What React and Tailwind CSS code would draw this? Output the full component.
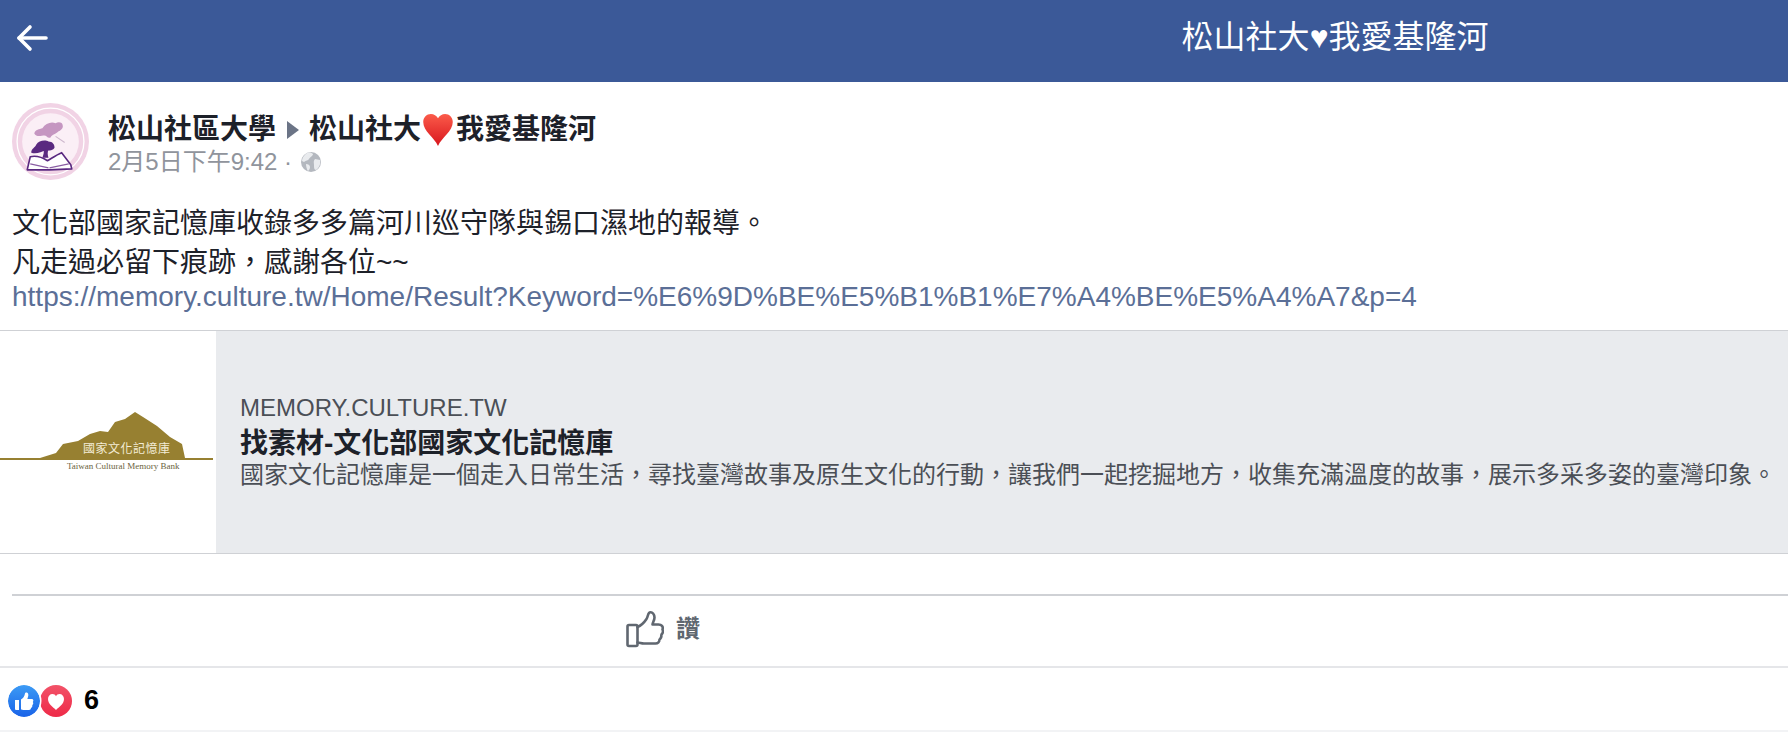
import React from "react";

const cjk = "font-['Liberation_Sans','Noto_Sans_CJK_TC',sans-serif]";

const BackArrow = () => (
  <svg width="32" height="28" viewBox="0 0 32 28" fill="none" stroke="#fff" strokeWidth="3.600" strokeLinecap="round" strokeLinejoin="round" className="shrink-0 mb-[6px]">
    <path d="M3 14H30" />
    <path d="M14 3 3 14 14 25" />
  </svg>
);

const Avatar = () => (
  <svg width="77" height="77" viewBox="0 0 76 76" className="shrink-0">
    <circle cx="38" cy="38" r="38" fill="#f1d3e5" />
    <circle cx="38" cy="38" r="33" fill="none" stroke="#fff" strokeWidth="1.300" />
    <circle cx="38" cy="38" r="28" fill="#fbeff6" />
    <path d="M22 30c1-4 5-4 8-5 3-5 9-7 13-5 3-2 7-1 7 2 1 3-2 5-4 6-3 3-6 3-8 6-3 1-4-2-6-2-3 0-8 2-10-2Z" fill="#c596c1" />
    <path d="M43 33l9 6" stroke="#ccb6cc" strokeWidth="1" />
    <path d="M19 49c0-4 4-5 5-8 2-4 9-5 12-3 4 0 6 3 6 6-1 3-5 3-9 3-4 1-9 4-14 2Z" fill="#5a2980" />
    <path d="M31 46c1 3 0 5-1 8h6c-1-3-1-5 0-8Z" fill="#5a2980" />
    <path d="M15 66l3-13c5-1 11 0 17 4 5-3 9-6 14-8l9 12 1 4-22 1Z" fill="#fff" stroke="#5a2980" strokeWidth="1.600" strokeLinejoin="round" />
    <path d="M18 60l18 4M37 64l19-4" stroke="#8a5ea3" strokeWidth="1.200" />
  </svg>
);

const Globe = () => (
  <svg width="20" height="20" viewBox="0 0 20 20">
    <circle cx="10" cy="10" r="10" fill="#b4b8bf" />
    <path d="M6 1c3-1 5 0 6 1 0 2-3 3-4 5-1 2-3 1-5 3L1 9c0-3 2-6 5-8Zm8 6 5 1c1 4-1 8-4 10-2 0-2-3-2-5s-1-4 1-6ZM5 12c2 0 4 1 4 3s-1 3-2 4c-1-1-2-5-2-7Z" fill="#e9ebee" />
  </svg>
);

const Heart = () => (
  <svg width="30" height="32" viewBox="0 0 24 26" className="shrink-0 ml-[2px] mr-[3px]">
    <defs>
      <linearGradient id="heartRed" x1="0" y1="0" x2="0" y2="1">
        <stop offset="0" stopColor="#fb5b4a" />
        <stop offset="1" stopColor="#d8161d" />
      </linearGradient>
    </defs>
    <path d="M12 26C9 19 0 14 0 6.500 0 2.800 2.800 0 6.200 0 8.700 0 10.800 1.300 12 3.500 13.200 1.300 15.300 0 17.800 0 21.200 0 24 2.800 24 6.500 24 14 15 19 12 26Z" fill="url(#heartRed)" />
  </svg>
);

const MemoryLogo = () => (
  <div className="relative w-[216px] h-[66px]">
    <svg width="214" height="52" viewBox="0 0 214 52" className="absolute left-0 top-0">
      <path d="M40 49 56 44 63 35 78 32 90 25 100 22 108 23 115 13 125 10 135 3 143 8 157 17 170 28 182 35 185 49Z" fill="#978031" />
      <rect x="0" y="49" width="213" height="2" fill="#978031" />
    </svg>
    <span className="absolute left-[83px] top-[30px] text-[12px] leading-[18px] tracking-[0.5px] text-[#f3ecd6] font-['Noto_Sans_CJK_TC',sans-serif] whitespace-nowrap">國家文化記憶庫</span>
    <span className="absolute left-[67px] top-[51px] text-[9px] leading-[13px] text-[#6b6340] font-['Liberation_Serif',serif] whitespace-nowrap">Taiwan Cultural Memory Bank</span>
  </div>
);

const ThumbOutline = () => (
  <svg width="38" height="38" viewBox="0 0 38 38" fill="none" stroke="#606770" strokeWidth="2.600" strokeLinejoin="round" strokeLinecap="round" className="shrink-0">
    <rect x="1.500" y="15" width="10" height="21" rx="1.500" />
    <path d="M11.500 17c5-2 7-5 9-8 1.500-2 1-5 3-6.500 3-1 5 2 5 5 0 3-2 5-2 7h6c3 0 5 2 4 5 1 2 0 4-1 5 0 2-.5 4-2 5 0 2-1.500 4-4 4H18c-3 0-4-1-6.500-1" />
  </svg>
);

const ThumbBadge = () => (
  <svg width="32" height="32" viewBox="0 0 32 32" className="relative z-10 shrink-0 rounded-full ring-[1.5px] ring-white">
    <defs>
      <linearGradient id="likeBlue" x1="0" y1="0" x2="0" y2="1">
        <stop offset="0" stopColor="#3c9bf5" />
        <stop offset="1" stopColor="#1a63e8" />
      </linearGradient>
    </defs>
    <circle cx="16" cy="16" r="16" fill="url(#likeBlue)" />
    <path d="M7 15h4v10H8a1 1 0 0 1-1-1Zm6-.500c2-1 3.500-3 4-6 .300-1.500 3-1.500 3.300 1 .200 1.500-.500 3-1 4.500h4.500c1.800 0 2 2 1 3 .800 1 .500 2.500-.500 3 .300 1.200-.200 2.500-1.300 3 0 1.200-.800 2-2 2h-5c-1.500 0-2-.500-3-.500Z" fill="#fff" />
  </svg>
);

const HeartBadge = () => (
  <svg width="32" height="32" viewBox="0 0 32 32" className="shrink-0">
    <defs>
      <linearGradient id="loveRed" x1="0" y1="0" x2="0" y2="1">
        <stop offset="0" stopColor="#f25268" />
        <stop offset="1" stopColor="#ee2a48" />
      </linearGradient>
    </defs>
    <circle cx="16" cy="16" r="16" fill="url(#loveRed)" />
    <path d="M16 25c-3-3-8-6-8-11 0-3 2-5 4.500-5 1.500 0 2.800.800 3.500 2.200.700-1.400 2-2.200 3.500-2.200C22 9 24 11 24 14c0 5-5 8-8 11Z" fill="#fff" />
  </svg>
);

export default function App() {
  return (
    <div className={`w-[1788px] h-[734px] overflow-hidden bg-white ${cjk}`}>
      <header className="h-[82px] bg-[#3b5998] flex items-center pl-[16px]">
        <BackArrow />
        <h1 className="flex-1 text-center pl-[834px] pb-[9px] text-[32px] text-white font-normal">松山社大♥我愛基隆河</h1>
      </header>

      <div className="flex items-center gap-[19px] pl-[12px] h-[97px] mt-[11px]">
        <Avatar />
        <div className="pt-[7px]">
          <div className="flex items-center text-[28px] leading-[36px] font-bold text-[#1d2129]">
            <span>松山社區大學</span>
            <span className="w-0 h-0 ml-[11px] mr-[10px] border-y-[9px] border-y-transparent border-l-[12px] border-l-[#6b7486]" />
            <span>松山社大</span>
            <Heart />
            <span>我愛基隆河</span>
          </div>
          <div className="flex items-center text-[24px] leading-[32px] text-[#90949c] -mt-[2px]">
            <span>2月5日下午9:42 ·</span>
            <span className="ml-[9px]"><Globe /></span>
          </div>
        </div>
      </div>

      <div className="pl-[12px] mt-[14px] text-[28px] leading-[39px] text-[#1d2129]">
        <p>文化部國家記憶庫收錄多多篇河川巡守隊與錫口濕地的報導。</p>
        <p>凡走過必留下痕跡，感謝各位~~</p>
        <a className="block text-[#5b6f97] leading-[30px]">https://memory.culture.tw/Home/Result?Keyword=%E6%9D%BE%E5%B1%B1%E7%A4%BE%E5%A4%A7&amp;p=4</a>
      </div>

      <div className="mt-[18px] h-[224px] flex border-y border-[#cfd1d5]">
        <div className="w-[216px] shrink-0 pt-[78px] bg-white">
          <MemoryLogo />
        </div>
        <div className="flex-1 bg-[#e9ebee] pl-[24px] pt-[61px]">
          <div className="text-[24px] leading-[32px] text-[#4b4f56]">MEMORY.CULTURE.TW</div>
          <div className="text-[28px] leading-[36px] font-bold text-[#1d2129] mt-[2px]">找素材-文化部國家文化記憶庫</div>
          <div className="text-[24px] leading-[34px] text-[#4b4f56] whitespace-nowrap -mt-[4px]">國家文化記憶庫是一個走入日常生活，尋找臺灣故事及原生文化的行動，讓我們一起挖掘地方，收集充滿溫度的故事，展示多采多姿的臺灣印象。</div>
        </div>
      </div>

      <div className="ml-[12px] mt-[40px] border-t-2 border-[#cfd1d5] h-[72px] flex items-center gap-[12px] pl-[614px] pb-[4px]">
        <ThumbOutline />
        <span className="text-[24px] font-bold text-[#606770]">讚</span>
      </div>

      <div className="border-t-2 border-b-2 border-t-[#e5e6e9] border-b-[#f2f3f5] h-[66px] flex items-center pl-[8px] pt-[3px]">
        <ThumbBadge />
        <HeartBadge />
        <span className="ml-[12px] text-[27px] font-bold text-black">6</span>
      </div>
    </div>
  );
}
